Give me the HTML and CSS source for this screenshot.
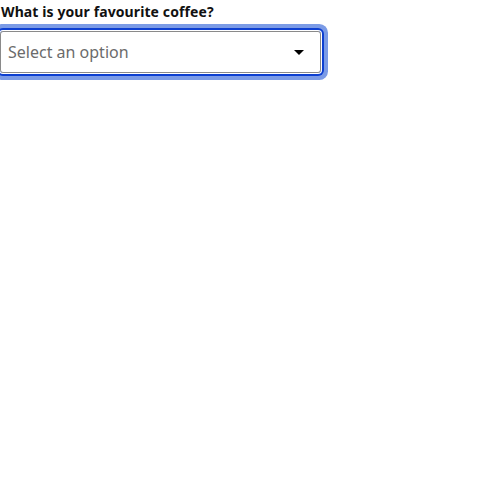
FILE: index.html
```html
<!DOCTYPE html>
<html>
<head>
<meta charset="utf-8">
<link rel="stylesheet" href="styles.css">
</head>
<body>
<div class="field">
  <label class="label" for="coffee">What is your favourite coffee?</label>
  <div class="select">
    <span class="placeholder">Select an option</span>
    <svg class="arrow" width="10" height="5" viewBox="0 0 10 5"><path d="M0 0H10L5 5Z" fill="#000"/></svg>
  </div>
</div>
</body>
</html>
```
FILE: styles.css
```css
html, body { margin: 0; padding: 0; background: #fff; }
body { font-family: "Noto Sans", sans-serif; min-height: 500px; }
.field { display: flex; flex-direction: column; align-items: flex-start; padding-top: 2px; padding-bottom: 20px; }
.label { font-size: 14px; font-weight: 700; color: #111; line-height: 20px; letter-spacing: 0.1px; padding-left: 1px; }
.select {
  margin-top: 9px;
  box-sizing: border-box;
  width: 321px;
  height: 42px;
  border: 1px solid #8a8a8a;
  border-radius: 3px;
  display: flex;
  align-items: center;
  justify-content: space-between;
  padding: 0 16px 0 7px;
  box-shadow: 0 0 0 1px #fff, 0 0 0 3px #0d3fd1, 0 0 0 7px #7b9be6;
}
.placeholder { font-size: 16px; color: #6b6b6b; }
.arrow { display: block; }
```
